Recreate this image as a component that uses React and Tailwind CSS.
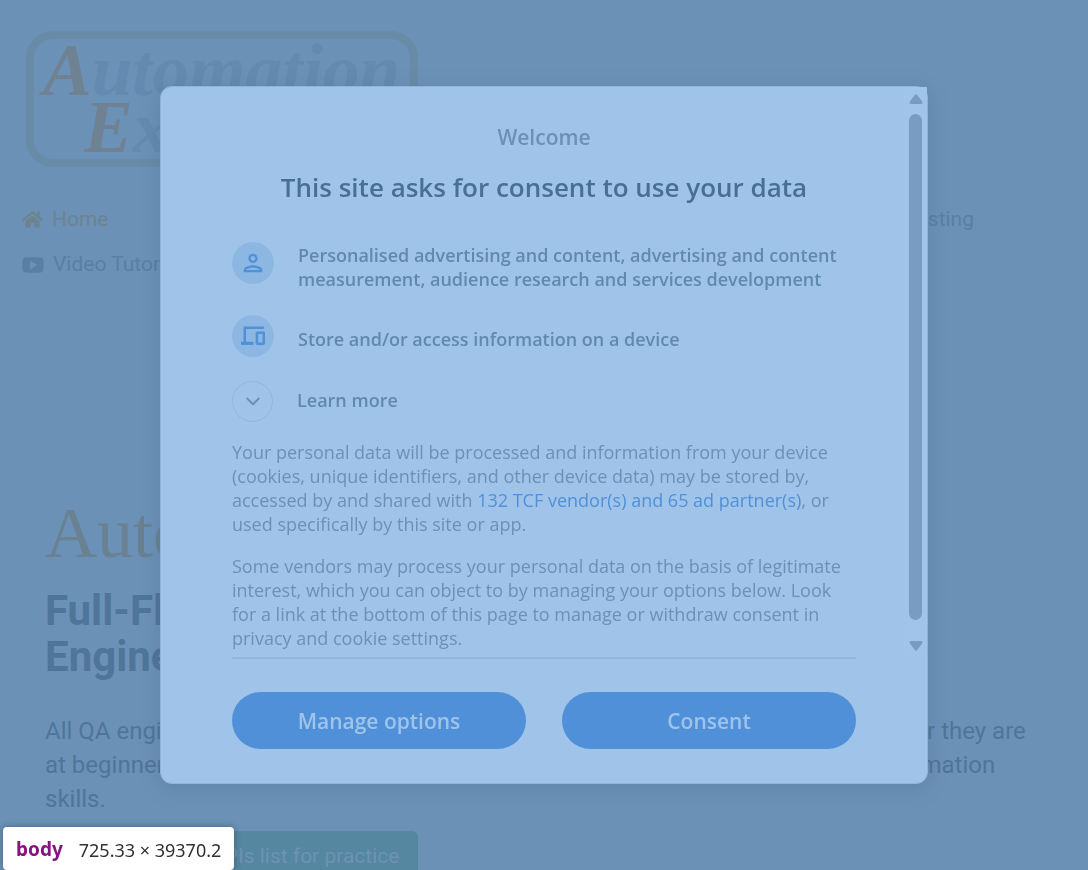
import React from 'react';
import { FaHome } from 'react-icons/fa';
import { MdOutlinePerson } from 'react-icons/md';

function Logo() {
  return (
    <svg viewBox="0 0 392 136" className="h-[136px] w-[392px] overflow-visible" role="img" aria-label="Automation Exercise">
      <rect x="4" y="4" width="384" height="128" rx="23" fill="none" stroke="#688ba7" strokeWidth="8" />
      <g fontFamily="'Liberation Serif', serif" fontStyle="italic" fontWeight="bold" fontSize="73" fill="#658ab1">
        <text x="17" y="64">
          <tspan fill="#6f8294">A</tspan>utomation
        </text>
        <text x="58" y="121">
          <tspan fill="#6f8294">E</tspan>xercise
        </text>
      </g>
    </svg>
  );
}

function PlayIcon() {
  return (
    <svg viewBox="0 0 22 16" className="h-4 w-[22px]" aria-hidden="true">
      <path
        fillRule="evenodd"
        fill="currentColor"
        d="M4 .4Q11 0 18 .4Q21.300.700 21.500 4Q21.900 8 21.500 12Q21.300 15.200 18 15.500Q11 15.900 4 15.500Q.800 15.200.500 12Q.100 8 .5 4Q.800.700 4 .4zM8 3.800v8.600l7.500-4.300z"
      />
    </svg>
  );
}

function DevicesIcon() {
  return (
    <svg viewBox="0 0 24 20" className="h-5 w-6" fill="none" stroke="currentColor" strokeWidth="2.5" aria-hidden="true">
      <path d="M23 1.700H3.800V16.500" />
      <path d="M0 17.300H12.500" strokeWidth="3.200" />
      <rect x="15.900" y="6.700" width="6.900" height="11" rx="0.400" />
    </svg>
  );
}

function SitePage() {
  return (
    <div className="font-['Roboto',sans-serif] text-[#50759a]">
      <header className="pt-[31px] pl-[22px]">
        <div className="pl-1">
          <Logo />
        </div>
        <nav className="mt-[30px] pr-[114px] text-[21px] leading-[45px] text-[#5a7fa4]">
          <ul className="flex flex-wrap justify-between">
            <li>
              <a href="#home" className="flex items-center gap-[9px] text-[#6d8490]">
                <FaHome size={21} /> Home
              </a>
            </li>
            <li>
              <a href="#api">API Testing</a>
            </li>
            <li className="w-full">
              <a href="#videos" className="flex items-center gap-[9px]">
                <PlayIcon /> Video Tutorials
              </a>
            </li>
          </ul>
        </nav>
      </header>
      <main className="px-[45px] pt-[206px]">
        <h1 className="font-['Liberation_Serif',serif] text-[72px] leading-[80px] text-[#698190]">AutomationExercise</h1>
        <h2 className="mt-[15px] text-[42px] leading-[46px] font-bold">
          Full-Fledged practice website for Automation Engineers
        </h2>
        <p className="mt-[34px] text-2xl leading-[34px]">
          All QA engineers can use this website for automation practice and API testing either they are at beginner or
          advance level. This is for everybody to help them brush up their automation skills.
        </p>
        <button
          type="button"
          className="mt-[15px] ml-[147px] rounded-md bg-[#5587a0] px-[19px] py-[10px] text-[21px] leading-[31px] text-[#6d92b5]"
        >
          APIs list for practice
        </button>
      </main>
    </div>
  );
}

function Scrollbar() {
  return (
    <div className="flex w-[23px] flex-col items-center bg-[#a1c5ea] pt-[7px] pb-[6px] text-[#799dc1]" aria-hidden="true">
      <svg viewBox="0 0 14 10" className="h-[10px] w-[14px]" fill="currentColor" stroke="currentColor" strokeWidth="3" strokeLinejoin="round">
        <path d="M7 1.800l5 6.700H2z" />
      </svg>
      <div className="mt-[10px] mb-[21px] w-[13px] flex-1 rounded-full bg-[#799dc1]" />
      <svg viewBox="0 0 14 10" className="h-[10px] w-[14px]" fill="currentColor" stroke="currentColor" strokeWidth="3" strokeLinejoin="round">
        <path d="M7 8.200l5-6.700H2z" />
      </svg>
    </div>
  );
}

function ConsentDialog() {
  return (
    <div
      role="dialog"
      aria-labelledby="consent-title"
      className="w-full max-w-[768px] rounded-xl border border-[#90b4d9] bg-[#a0c4e9] font-['Open_Sans',sans-serif] text-lg leading-6 text-[#6c91b6] shadow-[0_4px_20px_rgba(60,90,130,0.25)]"
    >
      <div className="flex">
        <div className="flex-1 pt-[38px] pr-12 pb-[7px] pl-[71px]">
          <p className="text-center text-[21px] font-semibold">Welcome</p>
          <h2 id="consent-title" className="mt-5 text-center text-[26px] leading-9 font-semibold text-[#496f94]">
            This site asks for consent to use your data
          </h2>
          <ul className="mt-[37px] flex flex-col gap-6 font-semibold text-[#6189b0]">
            <li className="flex gap-6">
              <span className="flex size-[42px] shrink-0 items-center justify-center rounded-full bg-[#8db7e3] text-[#5090d9]">
                <MdOutlinePerson size={28} />
              </span>
              <span className="pt-px">
                Personalised advertising and content, advertising and content measurement, audience research and
                services development
              </span>
            </li>
            <li className="flex gap-6">
              <span className="flex size-[42px] shrink-0 items-center justify-center rounded-full bg-[#8db7e3] text-[#5090d9]">
                <DevicesIcon />
              </span>
              <span className="pt-3">Store and/or access information on a device</span>
            </li>
          </ul>
          <button type="button" className="mt-6 flex items-center gap-6 font-semibold text-[#6189b0]">
            <span className="flex size-[41px] items-center justify-center rounded-full border border-[#92b6dc]">
              <svg viewBox="0 0 14 9" className="h-[9px] w-[14px]" fill="none" stroke="#6c91b6" strokeWidth="2" aria-hidden="true">
                <path d="M.7 1l6.300 6.300L13.300 1" />
              </svg>
            </span>
            <span className="pb-1">Learn more</span>
          </button>
          <p className="mt-[18px]">
            Your personal data will be processed and information from your device (cookies, unique identifiers, and
            other device data) may be stored by, accessed by and shared with{' '}
            <a href="#vendors" className="text-[#5090d9]">132 TCF vendor(s) and 65 ad partner(s)</a>, or used
            specifically by this site or app.
          </p>
          <p className="mt-[18px]">
            Some vendors may process your personal data on the basis of legitimate interest, which you can object to by
            managing your options below. Look for a link at the bottom of this page to manage or withdraw consent in
            privacy and cookie settings.
          </p>
        </div>
        <Scrollbar />
      </div>
      <div className="mx-[71px] grid grid-cols-2 gap-9 border-t-2 border-[#92b6dc] pt-[33px] pb-[34px] text-[21px] font-semibold text-[#a0c4e9]">
        <button type="button" className="h-[57px] rounded-full bg-[#5090d9]">Manage options</button>
        <button type="button" className="h-[57px] rounded-full bg-[#5090d9]">Consent</button>
      </div>
    </div>
  );
}

export default function App() {
  return (
    <div className="relative h-screen overflow-hidden bg-[#6c91b6]">
      <SitePage />
      <div className="fixed inset-0 flex items-center justify-center">
        <ConsentDialog />
      </div>
      <div className="fixed bottom-0 left-[3px] flex h-[43px] items-center gap-4 rounded bg-white px-[13px] pt-[3px] font-['Noto_Sans',sans-serif] text-lg text-[#303030] shadow-[0_0_6px_rgba(30,50,80,0.5)]">
        <span className="text-[19px] font-bold text-[#881280]">body</span>
        <span>725.33 × 39370.2</span>
      </div>
    </div>
  );
}
